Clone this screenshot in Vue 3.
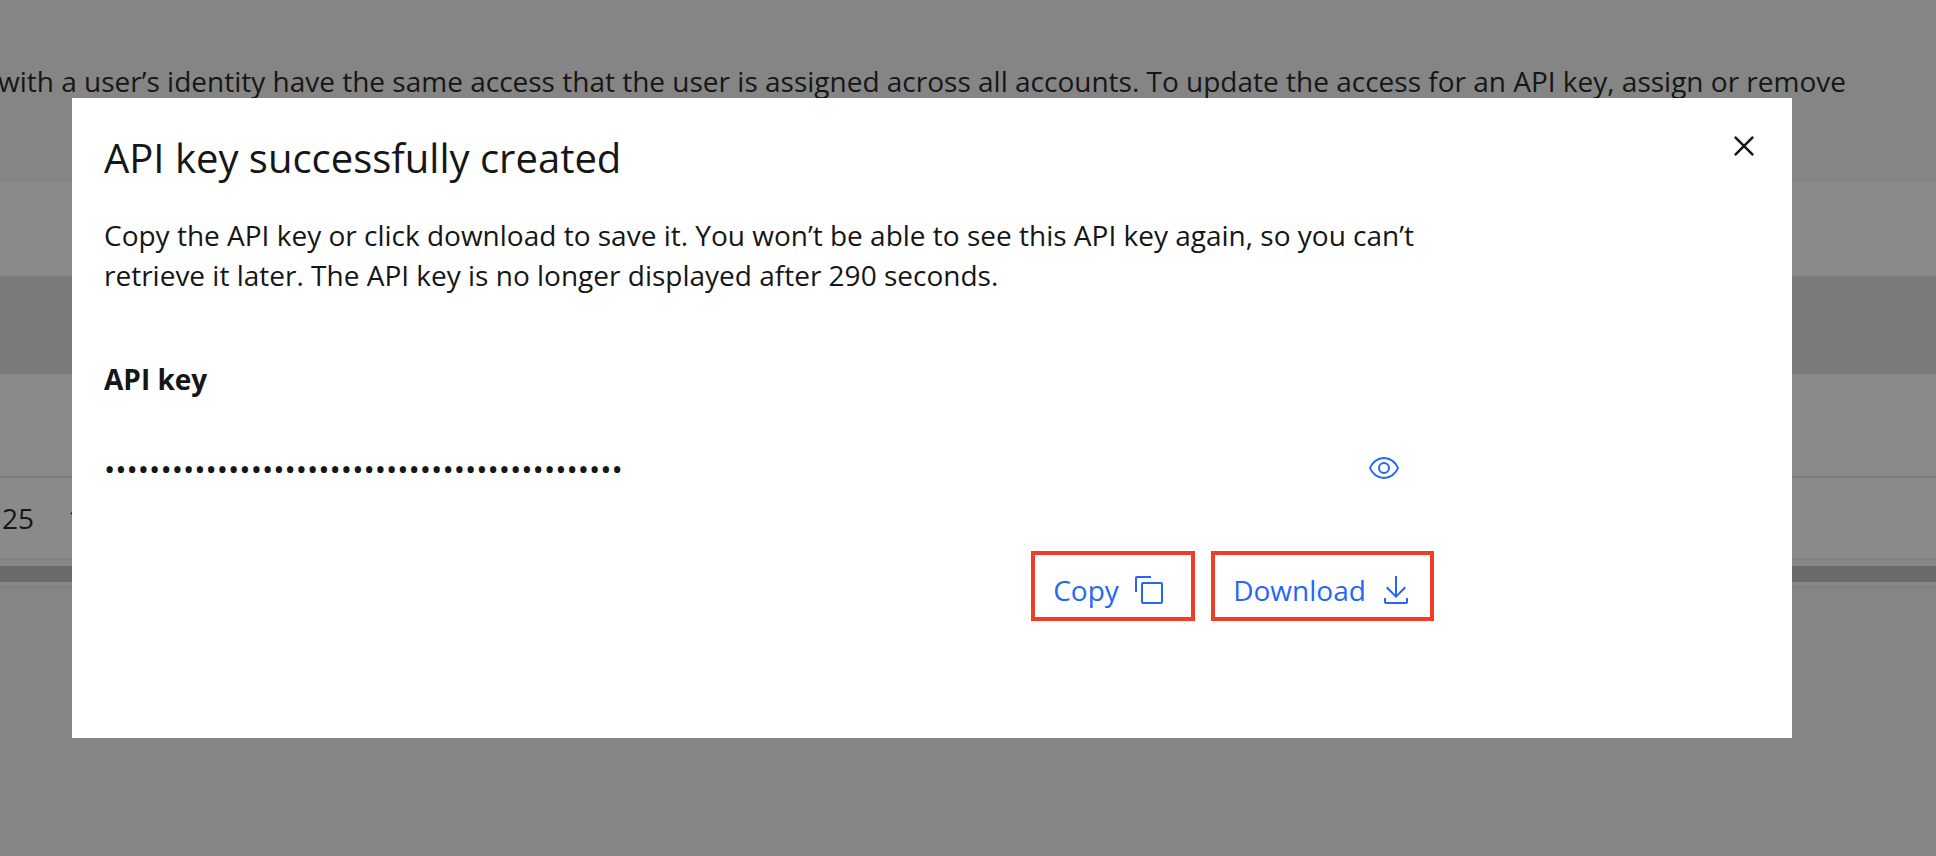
<script setup>
import { ref } from 'vue'

const shown = ref(false)
const apiKey = ref('x'.repeat(46))
</script>

<template>
  <div class="page">
    <header class="intro">
      <p>with a user’s identity have the same access that the user is assigned across all accounts. To update the access for an API key, assign or remove</p>
    </header>
    <div class="toolbar"></div>
    <div class="table-head"></div>
    <div class="row row-tall"></div>
    <div class="row row-data"><span>25</span><span>1</span></div>
    <div class="scroll-track"><div class="scroll-thumb"></div></div>

    <div class="overlay">
      <section class="modal" role="dialog" aria-modal="true" aria-labelledby="modal-title">
        <div class="modal-head">
          <h1 id="modal-title">API key successfully created</h1>
          <button class="icon-button close" type="button" aria-label="Close">
            <svg width="40" height="40" viewBox="0 0 32 32" fill="currentColor"><path d="M17.4141 16L24 9.4141 22.5859 8 16 14.5859 9.4143 8 8 9.4141 14.5859 16 8 22.5859 9.4143 24 16 17.4141 22.5859 24 24 22.5859 17.4141 16z" /></svg>
          </button>
        </div>
        <div class="modal-body">
          <p>Copy the API key or click download to save it. You won’t be able to see this API key again, so you can’t retrieve it later. The API key is no longer displayed after 290 seconds.</p>
          <label for="api-key">API key</label>
          <div class="key-row">
            <input id="api-key" v-model="apiKey" :type="shown ? 'text' : 'password'" readonly />
            <button class="icon-button view" type="button" aria-label="Show API key" @click="shown = !shown">
              <svg width="32" height="32" viewBox="0 0 32 32" fill="currentColor">
                <path d="M30.94,15.66A16.69,16.69,0,0,0,16,5,16.69,16.69,0,0,0,1.06,15.66a1,1,0,0,0,0,.68A16.69,16.69,0,0,0,16,27,16.69,16.69,0,0,0,30.94,16.34,1,1,0,0,0,30.94,15.66ZM16,25c-5.3,0-10.9-3.93-12.93-9C5.1,10.93,10.7,7,16,7s10.9,3.93,12.93,9C26.9,21.07,21.3,25,16,25Z" />
                <path d="M16,10a6,6,0,1,0,6,6A6,6,0,0,0,16,10Zm0,10a4,4,0,1,1,4-4A4,4,0,0,1,16,20Z" />
              </svg>
            </button>
          </div>
          <div class="actions">
            <button class="action copy" type="button">
              Copy
              <svg width="32" height="32" viewBox="0 0 32 32" fill="currentColor">
                <path d="M28,10V28H10V10H28m0-2H10a2,2,0,0,0-2,2V28a2,2,0,0,0,2,2H28a2,2,0,0,0,2-2V10a2,2,0,0,0-2-2Z" />
                <path d="M4,18H2V4A2,2,0,0,1,4,2H18V4H4Z" />
              </svg>
            </button>
            <button class="action download" type="button">
              Download
              <svg width="32" height="32" viewBox="0 0 32 32" fill="currentColor">
                <path d="M26,24v4H6V24H4v4a2,2,0,0,0,2,2H26a2,2,0,0,0,2-2V24Z" />
                <path d="M26 14 24.59 12.59 17 20.17 17 2 15 2 15 20.17 7.41 12.59 6 14 16 24 26 14Z" />
              </svg>
            </button>
          </div>
        </div>
      </section>
    </div>
  </div>
</template>

<style>
body {
  margin: 0;
}
</style>

<style scoped>
.page {
  position: relative;
  min-height: 100vh;
  overflow: hidden;
  background: #f4f4f4;
  color: #161616;
  font-family: "Open Sans", "Noto Sans", sans-serif;
  font-size: 28px;
  line-height: 40px;
}
p,
h1 {
  margin: 0;
  font-weight: 400;
}
.intro {
  box-sizing: border-box;
  height: 182px;
  margin-left: -2px;
  padding-top: 61px;
  white-space: nowrap;
}
.toolbar {
  height: 94px;
  background: #fff;
}
.table-head {
  height: 98px;
  background: #e0e0e0;
}
.row {
  box-sizing: border-box;
  background: #fff;
}
.row-tall {
  height: 104px;
  border-bottom: 2px solid #e0e0e0;
}
.row-data {
  display: flex;
  align-items: center;
  gap: 34px;
  height: 82px;
  padding-left: 2px;
  border-bottom: 2px solid #eaeaea;
}
.scroll-track {
  padding: 6px 0 4px;
  background: #fafafa;
  border-bottom: 2px solid #eaeaea;
}
.scroll-thumb {
  height: 16px;
  background: #c1c1c1;
}
.overlay {
  position: absolute;
  inset: 0;
  padding: 98px 144px 0 72px;
  background: rgba(22, 22, 22, 0.5);
}
.modal {
  padding: 24px 24px 117px 32px;
  background: #fff;
}
.modal-head {
  display: flex;
  align-items: flex-start;
  justify-content: space-between;
}
h1 {
  padding-top: 8px;
  font-size: 40px;
  line-height: 56px;
}
.modal-body {
  width: calc(80% - 1px);
  padding-top: 29px;
}
button {
  padding: 0;
  background: none;
  border: 0;
  color: #2666f7;
  font: inherit;
  cursor: pointer;
}
svg {
  display: block;
  flex: none;
}
.icon-button {
  display: flex;
  align-items: center;
  justify-content: center;
  flex: none;
  width: 48px;
  height: 48px;
}
.close {
  color: #161616;
}
.view {
  margin-right: 26px;
}
label {
  display: block;
  margin-top: 64px;
  font-weight: 700;
}
.key-row {
  display: flex;
  align-items: center;
  height: 64px;
  margin-top: 37px;
}
input {
  flex: 1;
  min-width: 0;
  padding: 0;
  border: 0;
  outline: 0;
  color: inherit;
  background: none;
  font-family: inherit;
  font-size: 30px;
}
.actions {
  display: flex;
  justify-content: flex-end;
  gap: 16px;
  margin-top: 51px;
}
.action {
  display: flex;
  align-items: center;
  gap: 14px;
  box-sizing: border-box;
  height: 70px;
  padding: 7px 0 0 18px;
  border: 4px solid #ee3f26;
}
.copy {
  width: 164px;
}
.download {
  width: 223px;
}
</style>
